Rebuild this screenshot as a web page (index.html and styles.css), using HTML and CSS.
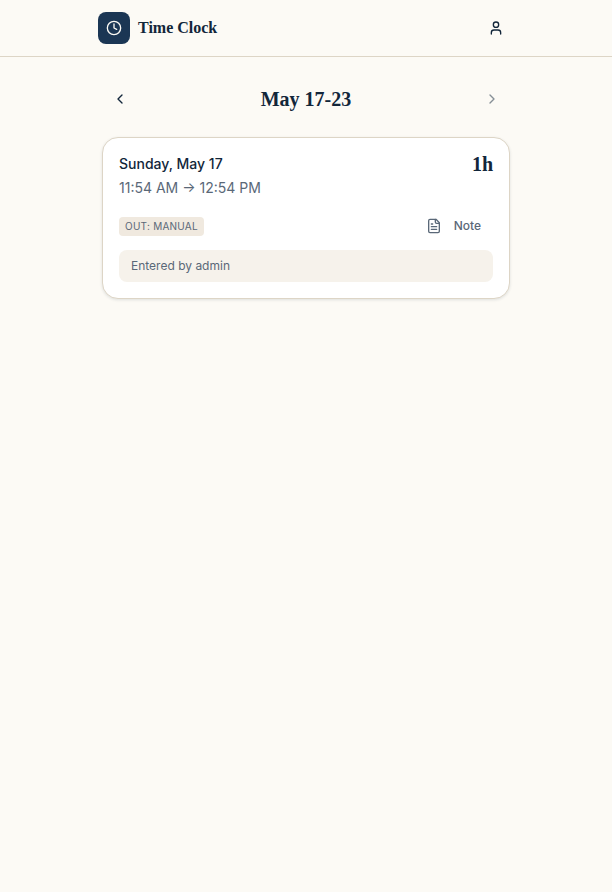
FILE: index.html
```html
<!DOCTYPE html>
<html lang="en">
<head>
<meta charset="utf-8">
<meta name="viewport" content="width=device-width, initial-scale=1">
<title>Time Clock</title>
<link rel="stylesheet" href="styles.css">
</head>
<body>
<header class="topbar">
  <div class="topbar-inner">
    <a class="brand" href="#">
      <span class="brand-mark">
        <svg class="icon" viewBox="0 0 24 24" aria-hidden="true"><circle cx="12" cy="12" r="10"/><path d="M12 6v6l4 2"/></svg>
      </span>
      <span class="brand-name">Time Clock</span>
    </a>
    <button class="icon-button" type="button" aria-label="Account">
      <svg class="icon" viewBox="0 0 24 24" aria-hidden="true"><path d="M19 21v-2a4 4 0 0 0-4-4H9a4 4 0 0 0-4 4v2"/><circle cx="12" cy="7" r="4"/></svg>
    </button>
  </div>
</header>
<main class="page">
  <nav class="week-nav" aria-label="Week">
    <button class="icon-button" type="button" aria-label="Previous week">
      <svg class="icon" viewBox="0 0 24 24" aria-hidden="true"><path d="m15 18-6-6 6-6"/></svg>
    </button>
    <h1 class="week-title">May 17-23</h1>
    <button class="icon-button" type="button" aria-label="Next week" disabled>
      <svg class="icon" viewBox="0 0 24 24" aria-hidden="true"><path d="m9 18 6-6-6-6"/></svg>
    </button>
  </nav>
  <article class="card">
    <div class="card-head">
      <div>
        <h2 class="day">Sunday, May 17</h2>
        <p class="times">11:54 AM → 12:54 PM</p>
      </div>
      <span class="total">1h</span>
    </div>
    <div class="card-actions">
      <span class="badge">OUT: MANUAL</span>
      <button class="note-button" type="button">
        <svg class="icon" viewBox="0 0 24 24" aria-hidden="true"><path d="M15 2H6a2 2 0 0 0-2 2v16a2 2 0 0 0 2 2h12a2 2 0 0 0 2-2V7Z"/><path d="M14 2v4a2 2 0 0 0 2 2h4"/><path d="M10 9H8"/><path d="M16 13H8"/><path d="M16 17H8"/></svg>
        Note
      </button>
    </div>
    <p class="note">Entered by admin</p>
  </article>
</main>
</body>
</html>
```
FILE: styles.css
```css
:root {
  --ink: #12263a;
  --muted: #5a6878;
  --navy: #1b3654;
  --paper: #fcfaf5;
  --line: #ddd5c6;
  --serif: Georgia, "Liberation Serif", serif;
}

* { box-sizing: border-box; }

body {
  margin: 0;
  min-height: 100vh;
  background: var(--paper);
  color: var(--ink);
  font-family: Inter, "Liberation Sans", sans-serif;
  font-size: 14px;
  line-height: 20px;
}

h1, h2, p { margin: 0; }

button {
  border: 0;
  background: none;
  color: inherit;
  font: inherit;
  cursor: pointer;
}

.icon {
  width: 16px;
  height: 16px;
  fill: none;
  stroke: currentColor;
  stroke-width: 2;
  stroke-linecap: round;
  stroke-linejoin: round;
}

.topbar { border-bottom: 1px solid var(--line); }

.topbar-inner {
  display: flex;
  align-items: center;
  justify-content: space-between;
  max-width: 448px;
  height: 56px;
  margin: 0 auto;
  padding: 0 16px;
}

.brand {
  display: flex;
  align-items: center;
  gap: 8px;
  color: inherit;
  text-decoration: none;
}

.brand-mark {
  display: grid;
  place-items: center;
  width: 32px;
  height: 32px;
  border-radius: 8px;
  background: var(--navy);
  color: var(--paper);
}

.brand-name {
  font-family: var(--serif);
  font-size: 16px;
  font-weight: 700;
}

.icon-button {
  display: grid;
  place-items: center;
  width: 36px;
  height: 36px;
  padding: 0;
}

.icon-button:disabled {
  opacity: 0.5;
  cursor: default;
}

.page {
  max-width: 448px;
  margin: 0 auto;
  padding: 24px 20px;
}

.week-nav {
  display: flex;
  align-items: center;
  justify-content: space-between;
  margin-bottom: 20px;
}

.week-title {
  font-family: var(--serif);
  font-size: 20px;
  font-weight: 700;
}

.card {
  padding: 16px;
  border: 1px solid var(--line);
  border-radius: 16px;
  background: #fff;
  box-shadow: 0 1px 3px rgba(18, 38, 58, 0.12);
}

.card-head {
  display: flex;
  align-items: flex-start;
  justify-content: space-between;
}

.day {
  font-size: 14px;
  font-weight: 500;
}

.times {
  margin-top: 4px;
  color: var(--muted);
}

.total {
  font-family: var(--serif);
  font-size: 20px;
  font-weight: 700;
}

.card-actions {
  display: flex;
  align-items: center;
  justify-content: space-between;
  height: 32px;
  margin-top: 12px;
  color: var(--muted);
}

.badge {
  padding: 2px 6px;
  border-radius: 4px;
  background: #f0e9df;
  font-size: 10px;
  line-height: 15px;
  letter-spacing: 0.025em;
}

.note-button {
  display: flex;
  align-items: center;
  gap: 12px;
  height: 32px;
  padding: 0 12px;
  font-size: 12px;
  font-weight: 500;
}

.note {
  margin-top: 8px;
  padding: 6px 12px;
  border-radius: 8px;
  background: #f6f2eb;
  color: var(--muted);
  font-size: 12px;
}
```
